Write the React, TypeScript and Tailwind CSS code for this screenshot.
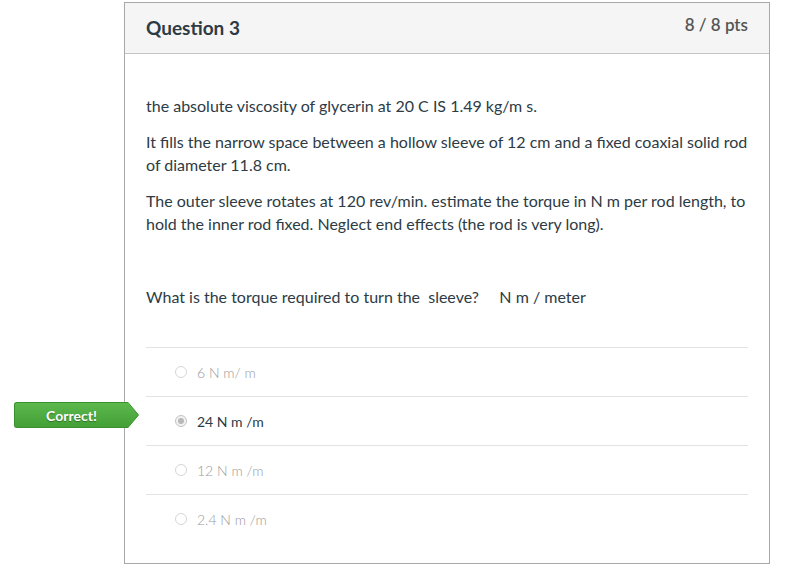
import React from 'react'

const answers = [
  { id: 'a1', label: '6 N m/ m', selected: false },
  { id: 'a2', label: '24 N m /m', selected: true },
  { id: 'a3', label: '12 N m /m', selected: false },
  { id: 'a4', label: '2.4 N m /m', selected: false }
]

const Radio = ({ checked }: { checked: boolean }) => (
  <span
    className={
      checked
        ? 'flex items-center justify-center w-[12px] h-[12px] rounded-full border border-[#c4c4c4] bg-[#f2f2f2]'
        : 'w-[12px] h-[12px] rounded-full border border-[#d6d6d6] bg-white'
    }
  >
    {checked && <span className="w-[6px] h-[6px] rounded-full bg-[#b8b8b8]" />}
  </span>
)

const CorrectBadge = () => (
  <div className="absolute left-[-132px] top-[5px] flex items-stretch h-[26px]">
    <div className="w-[114px] rounded-l-[3px] border border-r-0 border-[#3a8f2f] bg-gradient-to-b from-[#5cb84d] to-[#43a036] flex items-center justify-center">
      <span className="text-white text-[14px] font-bold [text-shadow:0_1px_1px_rgba(0,0,0,0.35)]">
        Correct!
      </span>
    </div>
    <svg width="11" height="26" viewBox="0 0 11 26" className="block">
      <defs>
        <linearGradient id="badgeGrad" x1="0" y1="0" x2="0" y2="1">
          <stop offset="0" stopColor="#5cb84d" />
          <stop offset="1" stopColor="#43a036" />
        </linearGradient>
      </defs>
      <path d="M0 0.5 L10.5 13 L0 25.5 Z" fill="url(#badgeGrad)" stroke="#3a8f2f" strokeWidth="1" />
      <rect x="0" y="1" width="1" height="24" fill="url(#badgeGrad)" />
    </svg>
  </div>
)

export default function App() {
  return (
    <div className="w-[789px] h-[572px] bg-white pt-[2px] font-['Lato','Liberation_Sans',sans-serif] text-[#2d3b45]">
      <div className="ml-[124px] w-[646px] h-[562px] border border-[#a8a8a8]">
        {/* Header */}
        <div className="h-[51px] bg-[#f5f5f5] border-b border-[#c4c4c4] flex items-center justify-between px-[21px]">
          <h2 className="text-[19px] font-bold text-[#2d3b45] pt-[1px]">Question 3</h2>
          <span className="text-[17px] font-semibold text-[#555] -mt-[6px]">8 / 8 pts</span>
        </div>

        {/* Body */}
        <div className="px-[21px] pt-[40px] text-[16px] leading-[23px]">
          <p className="mb-[13px]">the absolute viscosity of glycerin at 20 C IS 1.49 kg/m s.</p>
          <p className="mb-[13px]">
            It fills the narrow space between a hollow sleeve of 12 cm and a fixed coaxial solid rod of diameter 11.8 cm.
          </p>
          <p>
            The outer sleeve rotates at 120 rev/min. estimate the torque in N m per rod length, to hold the inner rod
            fixed. Neglect end effects (the rod is very long).
          </p>
          <p className="mt-[50px] whitespace-pre">What is the torque required to turn the  sleeve?     N m / meter</p>

          <div className="mt-[39px]">
            {answers.map((a) => (
              <div
                key={a.id}
                className="relative h-[49px] border-t border-[#e3e3e3] flex items-center pl-[29px] gap-[10px]"
              >
                {a.selected && <CorrectBadge />}
                <Radio checked={a.selected} />
                <span
                  className={
                    a.selected ? 'text-[14px] text-[#2d3b45]' : 'text-[14px] font-light text-[#9a9a9a]'
                  }
                >
                  {a.label}
                </span>
              </div>
            ))}
          </div>
        </div>
      </div>
    </div>
  )
}
